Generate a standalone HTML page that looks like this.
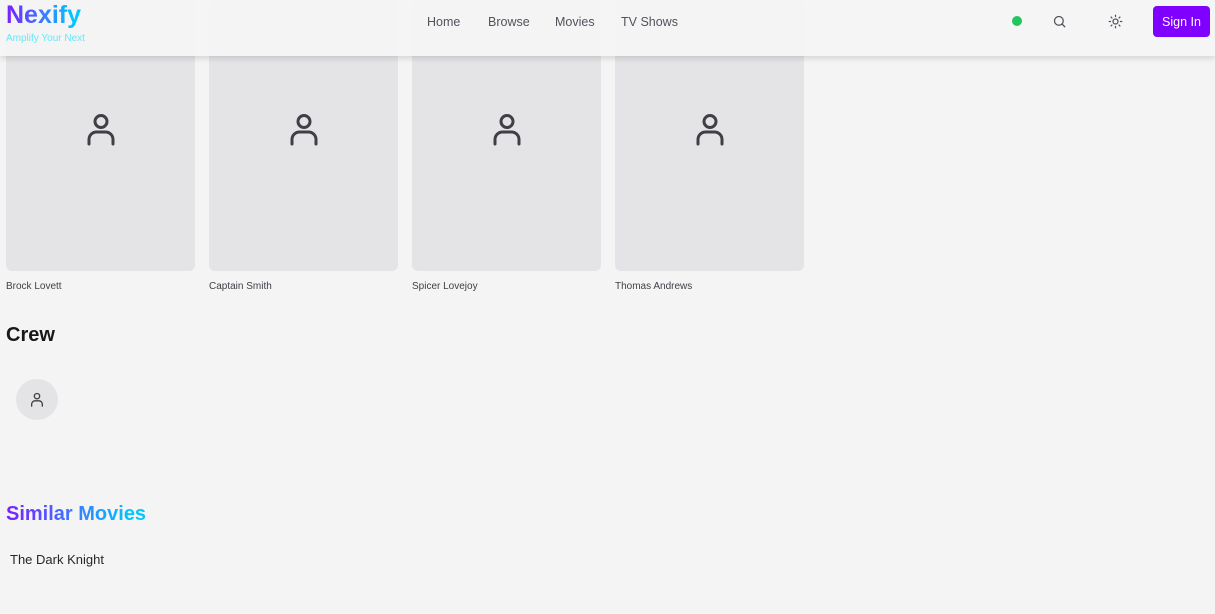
<!DOCTYPE html>
<html><head><style>
body{margin:0;width:1215px;height:614px;background:#f4f4f5;font-family:"Liberation Sans",sans-serif;position:relative;overflow:hidden;color:#18181b}
.hdr{position:absolute;left:0;top:0;width:1215px;height:56px;background:rgba(244,244,245,0.95);box-shadow:0 2px 6px rgba(0,0,0,0.15);z-index:5}
.logo{position:absolute;left:6px;top:1px;font-size:25px;font-weight:bold;background:linear-gradient(90deg,#7c1dff,#00c8ff 90%);-webkit-background-clip:text;color:transparent}
.tag{position:absolute;left:6px;top:33px;font-size:10px;color:#67e8f9}
.nav{position:absolute;top:15px;font-size:12.5px;color:#52525b}
.card{position:absolute;top:0;width:189px;height:271px;background:#e4e4e7;border-radius:6px}
.card svg{position:absolute;left:77px;top:110px}
.name{position:absolute;top:281px;font-size:10px;color:#3f3f46}
h2{position:absolute;margin:0;font-size:20px;font-weight:bold}
</style></head><body>
<div class="card" style="left:6px"><svg width="36" height="38" viewBox="0 0 24 24" fill="none" stroke="#3f3f46" stroke-width="2" stroke-linecap="round"><circle cx="12" cy="7" r="4"/><path d="M4 22v-3a5 5 0 0 1 5-5h6a5 5 0 0 1 5 5v3"/></svg></div>
<div class="card" style="left:209px"><svg width="36" height="38" viewBox="0 0 24 24" fill="none" stroke="#3f3f46" stroke-width="2" stroke-linecap="round"><circle cx="12" cy="7" r="4"/><path d="M4 22v-3a5 5 0 0 1 5-5h6a5 5 0 0 1 5 5v3"/></svg></div>
<div class="card" style="left:412px"><svg width="36" height="38" viewBox="0 0 24 24" fill="none" stroke="#3f3f46" stroke-width="2" stroke-linecap="round"><circle cx="12" cy="7" r="4"/><path d="M4 22v-3a5 5 0 0 1 5-5h6a5 5 0 0 1 5 5v3"/></svg></div>
<div class="card" style="left:615px"><svg width="36" height="38" viewBox="0 0 24 24" fill="none" stroke="#3f3f46" stroke-width="2" stroke-linecap="round"><circle cx="12" cy="7" r="4"/><path d="M4 22v-3a5 5 0 0 1 5-5h6a5 5 0 0 1 5 5v3"/></svg></div>
<div class="name" style="left:6px">Brock Lovett</div>
<div class="name" style="left:209px">Captain Smith</div>
<div class="name" style="left:412px">Spicer Lovejoy</div>
<div class="name" style="left:615px">Thomas Andrews</div>
<h2 style="left:6px;top:324px">Crew</h2>
<div style="position:absolute;left:16px;top:379px;width:42px;height:41px;border-radius:50%;background:#e4e4e7"><svg style="position:absolute;left:13px;top:12px" width="16" height="17" viewBox="0 0 24 24" fill="none" stroke="#3f3f46" stroke-width="2" stroke-linecap="round"><circle cx="12" cy="7" r="4"/><path d="M4 22v-3a5 5 0 0 1 5-5h6a5 5 0 0 1 5 5v3"/></svg></div>
<h2 style="left:6px;top:503px;background:linear-gradient(90deg,#7c1dff,#00c8ff 90%);-webkit-background-clip:text;color:transparent">Similar Movies</h2>
<div style="position:absolute;left:10px;top:552px;font-size:13px;color:#27272a">The Dark Knight</div>
<div class="hdr">
<div class="logo">Nexify</div><div class="tag">Amplify Your Next</div>
<div class="nav" style="left:427px">Home</div><div class="nav" style="left:488px">Browse</div><div class="nav" style="left:555px">Movies</div><div class="nav" style="left:621px">TV Shows</div>
<div style="position:absolute;left:1012px;top:16px;width:10px;height:10px;border-radius:50%;background:#22c55e"></div>
<svg style="position:absolute;left:1052px;top:14px" width="15" height="15" viewBox="0 0 24 24" fill="none" stroke="#52525b" stroke-width="2"><circle cx="11" cy="11" r="7"/><path d="M21 21l-5-5"/></svg>
<svg style="position:absolute;left:1108px;top:14px" width="15" height="15" viewBox="0 0 24 24" fill="none" stroke="#52525b" stroke-width="2" stroke-linecap="round"><circle cx="12" cy="12" r="4"/><path d="M12 2v2M12 20v2M2 12h2M20 12h2M4.9 4.9l1.4 1.4M17.7 17.7l1.4 1.4M4.9 19.1l1.4-1.4M17.7 6.3l1.4-1.4"/></svg>
<div style="position:absolute;left:1153px;top:6px;width:57px;height:31px;border-radius:4px;background:#7f00ff;color:#fff;font-size:12.5px;line-height:32px;text-align:center">Sign In</div>
</div>
</body></html>
